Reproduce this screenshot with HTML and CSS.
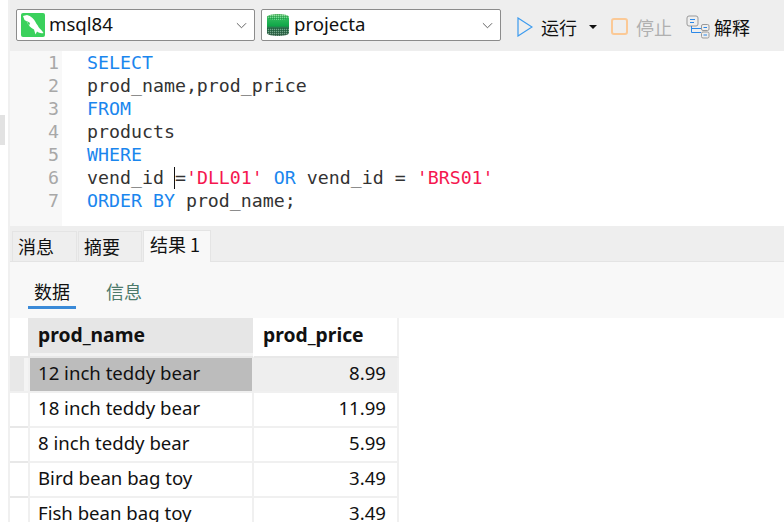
FILE: index.html
```html
<!DOCTYPE html>
<html lang="zh">
<head>
<meta charset="utf-8">
<title>Query</title>
<link rel="stylesheet" href="styles.css">
</head>
<body>
<div class="app">
  <aside class="strip"><div class="thumb"></div></aside>
  <main class="main">
    <header class="toolbar">
      <div class="combo first">
        <svg class="combo-icon" viewBox="0 0 24 24"><rect width="24" height="24" rx="2" fill="#3ad15c"/><path d="M2 3 L6 2 C10 3 13 6 14.500 9 C15 11 17 12 17.500 14 C19 16 21 17.500 22.500 20 C20 20.500 18 20 16 18.500 L14.500 21.500 L13 16.500 C9.500 15 7 12 6 8.500 L3.500 7 Z" fill="#fff"/><path d="M6 8 L9 10 L8 13 Z" fill="#3ad15c"/></svg>
        <span class="combo-text">msql84</span>
        <svg class="chev" viewBox="0 0 12 7"><path d="M1 1 L6 6 L11 1" fill="none" stroke="#555" stroke-width="1"/></svg>
      </div>
      <div class="combo second">
        <svg class="combo-icon" viewBox="0 0 24 24"><defs><pattern id="dit" width="2" height="2" patternUnits="userSpaceOnUse"><rect width="1" height="1" fill="#fff" fill-opacity=".35"/><rect x="1" y="1" width="1" height="1" fill="#000" fill-opacity=".2"/></pattern><linearGradient id="db" x1="0" y1="0" x2="0" y2="1"><stop offset="0" stop-color="#6fcf7c"/><stop offset=".2" stop-color="#2fbb5c"/><stop offset=".55" stop-color="#0fa648"/><stop offset=".6" stop-color="#2b7a50"/><stop offset="1" stop-color="#3c6d52"/></linearGradient></defs><path d="M1 4 C1 0 23 0 23 4 L23 20 C23 24 1 24 1 20 Z" fill="url(#db)"/><path d="M1 4 C1 0 23 0 23 4 C23 8 1 8 1 4 Z" fill="url(#dit)"/><path d="M1 15 L23 15 L23 20 C23 24 1 24 1 20 Z" fill="url(#dit)"/></svg>
        <span class="combo-text">projecta</span>
        <svg class="chev" viewBox="0 0 12 7"><path d="M1 1 L6 6 L11 1" fill="none" stroke="#555" stroke-width="1"/></svg>
      </div>
      <div class="actions">
        <svg class="play" viewBox="0 0 16 20"><path d="M1 1 L15 10 L1 19 Z" fill="none" stroke="#3c9bef" stroke-width="1.200"/></svg>
        <span class="action-text run-text">运行</span>
        <span class="caret"></span>
        <span class="stop"></span>
        <span class="action-text muted">停止</span>
        <svg class="explain" viewBox="0 0 24 24"><rect x="1" y="1" width="11" height="10" rx="2" fill="none" stroke="#999"/><path d="M4 4.500 H9 M4 7.500 H8" stroke="#2b88e8"/><path d="M5.500 11 V17.500 H15 M5.500 13.500 H15" fill="none" stroke="#2b88e8"/><rect x="15.500" y="9.500" width="7.500" height="6" rx="1.500" fill="none" stroke="#999"/><rect x="15.500" y="17" width="7.500" height="6" rx="1.500" fill="none" stroke="#999"/><path d="M17.500 12.500 H21 M17.500 20 H21" stroke="#2b88e8"/></svg>
        <span class="action-text explain-text">解释</span>
      </div>
    </header>
    <section class="editor">
      <div class="gutter">
        <div>1</div><div>2</div><div>3</div><div>4</div><div>5</div><div>6</div><div>7</div>
      </div>
      <div class="code">
        <div class="line kw">SELECT</div>
        <div class="line">prod_name,prod_price</div>
        <div class="line kw">FROM</div>
        <div class="line">products</div>
        <div class="line kw">WHERE</div>
        <div class="line">vend_id <span class="cursor"></span>=<span class="str">'DLL01'</span> <span class="kw">OR</span> vend_id = <span class="str">'BRS01'</span></div>
        <div class="line"><span class="kw">ORDER BY</span> prod_name;</div>
      </div>
    </section>
    <nav class="tabs">
      <span class="tab tab-a">消息</span>
      <span class="tab tab-b">摘要</span>
      <span class="tab active">结果 1</span>
    </nav>
    <nav class="subtabs">
      <span class="subtab current">数据</span>
      <span class="subtab">信息</span>
    </nav>
    <section class="grid">
      <div class="row head">
        <div class="mark"></div>
        <div class="cell name">prod_name</div>
        <div class="cell price">prod_price</div>
      </div>
      <div class="row selected">
        <div class="mark"></div>
        <div class="cell name">12 inch teddy bear</div>
        <div class="cell price num">8.99</div>
      </div>
      <div class="row">
        <div class="mark"></div>
        <div class="cell name">18 inch teddy bear</div>
        <div class="cell price num">11.99</div>
      </div>
      <div class="row">
        <div class="mark"></div>
        <div class="cell name">8 inch teddy bear</div>
        <div class="cell price num">5.99</div>
      </div>
      <div class="row">
        <div class="mark"></div>
        <div class="cell name">Bird bean bag toy</div>
        <div class="cell price num">3.49</div>
      </div>
      <div class="row">
        <div class="mark"></div>
        <div class="cell name">Fish bean bag toy</div>
        <div class="cell price num">3.49</div>
      </div>
    </section>
  </main>
</div>
</body>
</html>
```
FILE: styles.css
```css
* { box-sizing: border-box; }
html, body { margin: 0; height: 100%; overflow: hidden; background: #fff; }
body { font-family: "Noto Sans", "Noto Sans CJK SC", sans-serif; color: #111; }
.app { display: flex; width: 784px; height: 522px; overflow: hidden; }
.strip { position: relative; width: 10px; flex: none; background: #fff; border-right: 2px solid #f0f0f0; }
.thumb { position: absolute; left: 0; top: 115px; width: 5px; height: 30px; background: #e2e2e2; }
.main { flex: 1; min-width: 0; display: flex; flex-direction: column; }

.toolbar { height: 51px; flex: none; background: #eee; display: flex; align-items: flex-start; padding: 9px 0 0 6px; gap: 6px; }
.combo { height: 32px; background: #fff; border: 1px solid #8c8c8c; border-radius: 2px; display: flex; align-items: center; padding: 0 7px 0 4px; }
.first { width: 239px; }
.second { width: 240px; }
.combo-icon { width: 24px; height: 24px; flex: none; }
.combo-text { font-size: 18.6px; margin-left: 4px; flex: 1; padding-bottom: 3px; }
.chev { width: 11px; height: 7px; flex: none; }
.actions { display: flex; align-items: center; height: 36px; margin-left: 10px; padding-bottom: 1px; }
.play { width: 16px; height: 20px; }
.action-text { font-size: 18px; font-family: "Noto Sans CJK SC", sans-serif; margin-left: 8px; }
.caret { width: 0; height: 0; margin-left: 12px; border: 4px solid transparent; border-top: 4px solid #111; border-bottom: 0; }
.stop { width: 17px; height: 17px; margin-left: 14px; border: 2px solid #fbc996; border-radius: 3px; }
.muted { color: #b0b0b0; }
.explain { width: 24px; height: 24px; margin-left: 14px; }
.explain-text { margin-left: 4px; }

.editor { height: 175px; flex: none; display: flex; font-family: "DejaVu Sans Mono", monospace; font-size: 18.25px; line-height: 23px; background: #fff; }
.gutter { width: 52px; flex: none; background: #f8f8f8; padding: 0 3px 0 0; text-align: right; color: #a8a8a8; }
.code { padding-left: 25px; color: #333; }
.line { white-space: pre; height: 23px; }
.kw { color: #1a86ee; }
.str { color: #f5174f; }
.cursor { display: inline-block; width: 0; height: 22px; margin-left: -1px; border-left: 1px solid #111; vertical-align: -5px; }

.tabs { height: 36px; flex: none; background: #eee; border-bottom: 1px solid #e4e4e4; display: flex; align-items: flex-end; padding-left: 2px; gap: 1px; }
.tab { height: 30px; font-size: 18px; font-family: "Noto Sans CJK SC", sans-serif; line-height: 28px; padding: 0 5px; background: #eee; border: 1px solid #e4e4e4; border-bottom: 0; }
.tab-a { width: 65px; }
.tab-b { width: 64px; }
.active { width: 68px; height: 32px; padding-left: 6px; background: #f8f8f8; margin-bottom: -1px; position: relative; line-height: 26px; }

.subtabs { height: 56px; flex: none; background: #f8f8f8; display: flex; padding-left: 18px; gap: 24px; }
.subtab { height: 36px; margin-top: 11px; font-size: 18px; font-family: "Noto Sans CJK SC", sans-serif; line-height: 36px; color: #4d7a6b; text-align: center; width: 48px; }
.current { color: #111; border-bottom: 3px solid #3a8ad8; }

.grid { flex: 1; min-height: 0; overflow: hidden; }
.row { display: flex; height: 35px; font-size: 18.6px; }
.mark { width: 18px; flex: none; border-bottom: 2px solid #e8e8e8; }
.cell { display: flex; align-items: center; padding: 0 11px 4px 10px; border-bottom: 2px solid #f0f0f0; border-right: 2px solid #f0f0f0; }
.name { width: 226px; border-left: 2px solid #f0f0f0; padding-left: 8px; }
.price { width: 145px; padding-left: 9px; }
.num { justify-content: flex-end; }
.head { height: 40px; font-weight: 700; font-size: 19.3px; }
.head .mark { border-bottom: 2px solid #e8e8e8; }
.head .cell { border-bottom: 2px solid #e8e8e8; padding-bottom: 5px; background: #fff; }
.head .name { background: linear-gradient(#e6e6e6 35px, #f3f3f3 35px); border-left-color: #e6e6e6; border-right: 1px solid #fff; }
.selected .mark { background: linear-gradient(90deg, #e8e8e8 14px, #f4f4f4 14px); border-bottom-color: #f0f0f0; }
.selected .cell { background: #eee; }
.selected .name { background: #bcbcbc; border-right-color: #eee; }
```
